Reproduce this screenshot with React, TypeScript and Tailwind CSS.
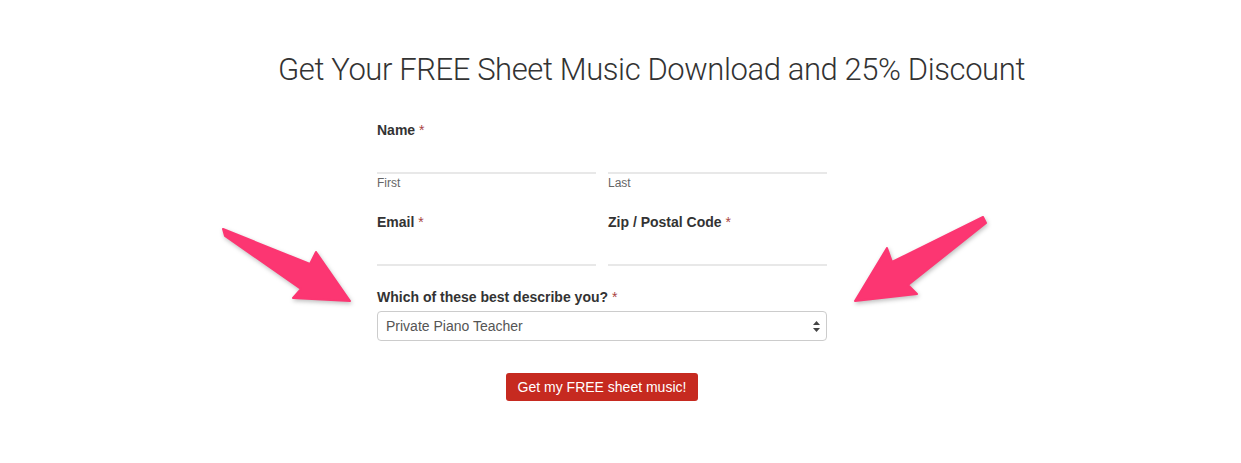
const labelCls = "block text-[14px] leading-5 font-bold text-[#333]";

function Req() {
  return <span className="text-[#a94442] font-normal"> *</span>;
}

function LineInput() {
  return (
    <input
      type="text"
      className="block w-full h-[34px] border-b-2 border-[#e8e8e8] bg-transparent outline-none text-[14px] text-[#555]"
    />
  );
}

function Arrows() {
  return (
    <svg
      className="absolute left-0 top-0 pointer-events-none drop-shadow-[1px_2px_2px_rgba(0,0,0,0.25)]"
      width="1241"
      height="463"
      viewBox="0 0 1241 463"
    >
      <g fill="#fc3672" stroke="#fc3672" strokeWidth="2" strokeLinejoin="round">
        <polygon points="223,229 310,264 316,252 350,301 293,298 301,289 225,236" />
        <polygon points="983,217 892,262 887,248 855,301 917,294 908,285 986,223" />
      </g>
    </svg>
  );
}

export default function App() {
  return (
    <div
      className="relative w-[1241px] h-[463px] bg-white overflow-hidden"
      style={{ fontFamily: '"Liberation Sans", Arial, sans-serif' }}
    >
      {/* heading */}
      <div className="pt-[50px] pl-[62px] text-center">
        <h1
          className="text-[31px] leading-[40px] font-light tracking-[-0.4px] text-[#333]"
          style={{ fontFamily: "Roboto, sans-serif" }}
        >
          Get Your FREE Sheet Music Download and 25% Discount
        </h1>
      </div>

      {/* form */}
      <form className="ml-[377px] w-[450px] mt-[30px]">
        <label className={labelCls}>
          Name
          <Req />
        </label>
        <div className="grid grid-cols-2 gap-3">
          <div>
            <LineInput />
            <span className="block mt-px text-[12px] leading-4 text-[#666]">First</span>
          </div>
          <div>
            <LineInput />
            <span className="block mt-px text-[12px] leading-4 text-[#666]">Last</span>
          </div>
        </div>

        <div className="grid grid-cols-2 gap-3 mt-[21px]">
          <div>
            <label className={labelCls}>
              Email
              <Req />
            </label>
            <LineInput />
          </div>
          <div>
            <label className={labelCls}>
              Zip / Postal Code
              <Req />
            </label>
            <LineInput />
          </div>
        </div>

        <label className={labelCls + " mt-[21px]"}>
          Which of these best describe you?
          <Req />
        </label>
        <div className="relative mt-1">
          <select className="block w-full h-[30px] appearance-none rounded border border-[#ccc] bg-white pl-2 pr-6 text-[14px] text-[#555] outline-none">
            <option>Private Piano Teacher</option>
          </select>
          <svg
            className="absolute right-[7px] top-[10px]"
            width="7"
            height="11"
            viewBox="0 0 7 11"
          >
            <path d="M3.5 0 L7 4 L0 4 Z M0 7 L7 7 L3.5 11 Z" fill="#444" />
          </svg>
        </div>

        <div className="flex justify-center mt-8">
          <button
            type="button"
            className="h-7 px-3 rounded-[3px] bg-[#c62a20] text-white text-[14px]"
          >
            Get my FREE sheet music!
          </button>
        </div>
      </form>

      <Arrows />
    </div>
  );
}
